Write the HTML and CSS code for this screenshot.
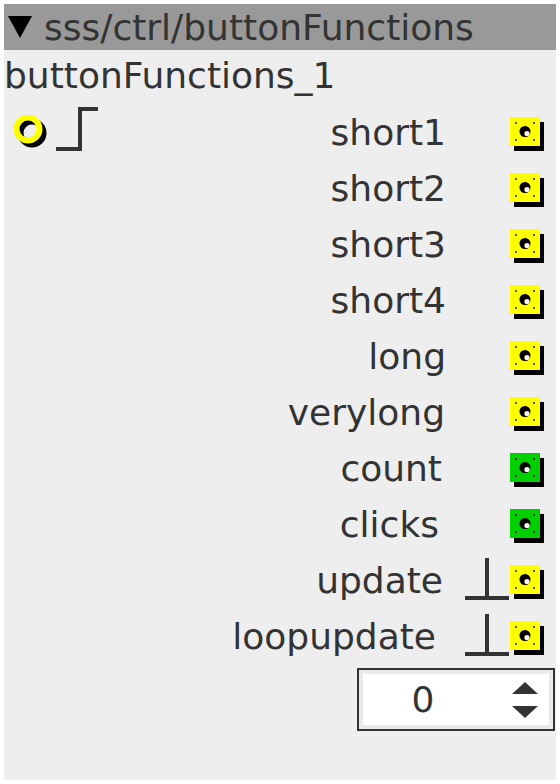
FILE: index.html
```html
<!DOCTYPE html>
<html>
<head>
<meta charset="utf-8">
<link rel="stylesheet" href="styles.css">
</head>
<body>
<div class="panel">
  <div class="header">
    <svg class="tri" width="24" height="24" viewBox="0 0 24 24"><polygon points="0,1 24,1 12,23" fill="#000"/></svg>
    <span class="htext">sss/ctrl/buttonFunctions</span>
  </div>
  <div class="title">buttonFunctions_1</div>
  <div class="rows">
    <div class="row">
      <div class="left">
        <svg class="ring" width="36" height="36" viewBox="0 0 36 36">
          <circle cx="18" cy="18" r="11.5" fill="none" stroke="#000" stroke-width="6"/>
          <circle cx="14" cy="14" r="11.5" fill="none" stroke="#ffff00" stroke-width="6"/>
        </svg>
        <svg class="step" width="44" height="46" viewBox="0 0 44 46"><polyline points="0,42 24,42 24,2 42,2" fill="none" stroke="#333" stroke-width="4"/></svg>
      </div>
      <div class="label">short1</div><div class="slot"></div>
      <svg class="sq" width="34" height="34" viewBox="0 0 34 34"><use href="#sqy"/></svg>
    </div>
    <div class="row"><div class="left"></div><div class="label">short2</div><div class="slot"></div><svg class="sq" width="34" height="34" viewBox="0 0 34 34"><use href="#sqy"/></svg></div>
    <div class="row"><div class="left"></div><div class="label">short3</div><div class="slot"></div><svg class="sq" width="34" height="34" viewBox="0 0 34 34"><use href="#sqy"/></svg></div>
    <div class="row"><div class="left"></div><div class="label">short4</div><div class="slot"></div><svg class="sq" width="34" height="34" viewBox="0 0 34 34"><use href="#sqy"/></svg></div>
    <div class="row"><div class="left"></div><div class="label">long</div><div class="slot"></div><svg class="sq" width="34" height="34" viewBox="0 0 34 34"><use href="#sqy"/></svg></div>
    <div class="row"><div class="left"></div><div class="label vl">verylong</div><div class="slot"></div><svg class="sq" width="34" height="34" viewBox="0 0 34 34"><use href="#sqy"/></svg></div>
    <div class="row"><div class="left"></div><div class="label co">count</div><div class="slot"></div><svg class="sq" width="34" height="34" viewBox="0 0 34 34"><use href="#sqg"/></svg></div>
    <div class="row"><div class="left"></div><div class="label cl">clicks</div><div class="slot"></div><svg class="sq" width="34" height="34" viewBox="0 0 34 34"><use href="#sqg"/></svg></div>
    <div class="row"><div class="left"></div><div class="label up">update</div><div class="slot"><svg class="tee" width="44" height="42" viewBox="0 0 44 42"><path d="M22 0 V40 M0 40 H44" fill="none" stroke="#333" stroke-width="4"/></svg></div><svg class="sq" width="34" height="34" viewBox="0 0 34 34"><use href="#sqy"/></svg></div>
    <div class="row"><div class="left"></div><div class="label lu">loopupdate</div><div class="slot"><svg class="tee" width="44" height="42" viewBox="0 0 44 42"><path d="M22 0 V40 M0 40 H44" fill="none" stroke="#333" stroke-width="4"/></svg></div><svg class="sq" width="34" height="34" viewBox="0 0 34 34"><use href="#sqy"/></svg></div>
  </div>
  <div class="spinrow">
    <div class="spin">
      <div class="spinval">0</div>
      <svg class="arrows" width="26" height="36" viewBox="0 0 26 36"><polygon points="13,0 26,12 0,12" fill="#333"/><polygon points="0,24 26,24 13,36" fill="#333"/></svg>
    </div>
  </div>
</div>
<svg width="0" height="0" class="defs">
  <defs>
    <g id="sqy">
      <rect x="4" y="5" width="30" height="29" fill="#000"/>
      <rect x="0" y="0" width="30" height="29" fill="#ffff00"/>
      <g fill="#555">
        <rect x="5" y="5" width="2" height="2"/><rect x="23" y="5" width="2" height="2"/>
        <rect x="5" y="22" width="2" height="2"/><rect x="23" y="22" width="2" height="2"/>
      </g>
      <circle cx="15" cy="14.5" r="5.5" fill="#000"/>
      <circle cx="17" cy="16.5" r="2.6" fill="#fff"/>
    </g>
    <g id="sqg">
      <rect x="4" y="5" width="30" height="29" fill="#000"/>
      <rect x="0" y="0" width="30" height="29" fill="#00d000"/>
      <g fill="#333">
        <rect x="5" y="5" width="2" height="2"/><rect x="23" y="5" width="2" height="2"/>
        <rect x="5" y="22" width="2" height="2"/><rect x="23" y="22" width="2" height="2"/>
      </g>
      <circle cx="15" cy="14.5" r="5.5" fill="#000"/>
      <circle cx="17" cy="16.5" r="2.6" fill="#fff"/>
    </g>
  </defs>
</svg>
</body>
</html>
```
FILE: styles.css
```css
html, body {
  margin: 0;
  padding: 0;
  background: #fff;
}
body {
  padding: 4px;
  font-family: "DejaVu Sans", sans-serif;
  color: #333;
}
.defs {
  position: absolute;
  width: 0;
  height: 0;
}
.panel {
  width: 552px;
  height: 776px;
  background: #eeeeee;
  display: flex;
  flex-direction: column;
}
.header {
  height: 46px;
  background: #999999;
  display: flex;
  align-items: center;
  padding-left: 4px;
  font-size: 36px;
}
.tri {
  margin-right: 12px;
}
.htext {
  color: #333;
}
.title {
  height: 54px;
  line-height: 52px;
  font-size: 36px;
  padding-left: 0;
}
.rows {
  display: flex;
  flex-direction: column;
}
.row {
  height: 56px;
  display: flex;
  align-items: center;
  font-size: 36px;
}
.left {
  flex: 1;
  display: flex;
  align-items: center;
  padding-left: 10px;
}
.ring {
  margin-top: 2px;
}
.step {
  margin-left: 6px;
  margin-top: -4px;
}
.label {
  text-align: right;
}
.label.vl {
  margin-right: 1px;
}
.label.co {
  margin-right: 4px;
}
.label.cl {
  margin-right: 7px;
}
.label.up {
  margin-right: 3px;
}
.label.lu {
  margin-right: 10px;
}
.slot {
  width: 64px;
  height: 56px;
  display: flex;
  justify-content: flex-end;
  align-items: center;
}
.tee {
  margin-right: 1px;
  margin-top: -2px;
}
.sq {
  margin-right: 12px;
  margin-top: 4px;
}
.spinrow {
  display: flex;
  justify-content: flex-end;
  padding-top: 4px;
  padding-right: 1px;
}
.spin {
  width: 186px;
  height: 51px;
  border: 2px solid #333;
  background: #fff;
  box-shadow: inset 0 0 0 4px #e9e9e9;
  display: flex;
  align-items: center;
  padding: 4px;
}
.spinval {
  flex: 1;
  text-align: center;
  font-size: 36px;
  padding-right: 19px;
}
.arrows {
  margin-right: 11px;
  margin-left: 10px;
}
```
